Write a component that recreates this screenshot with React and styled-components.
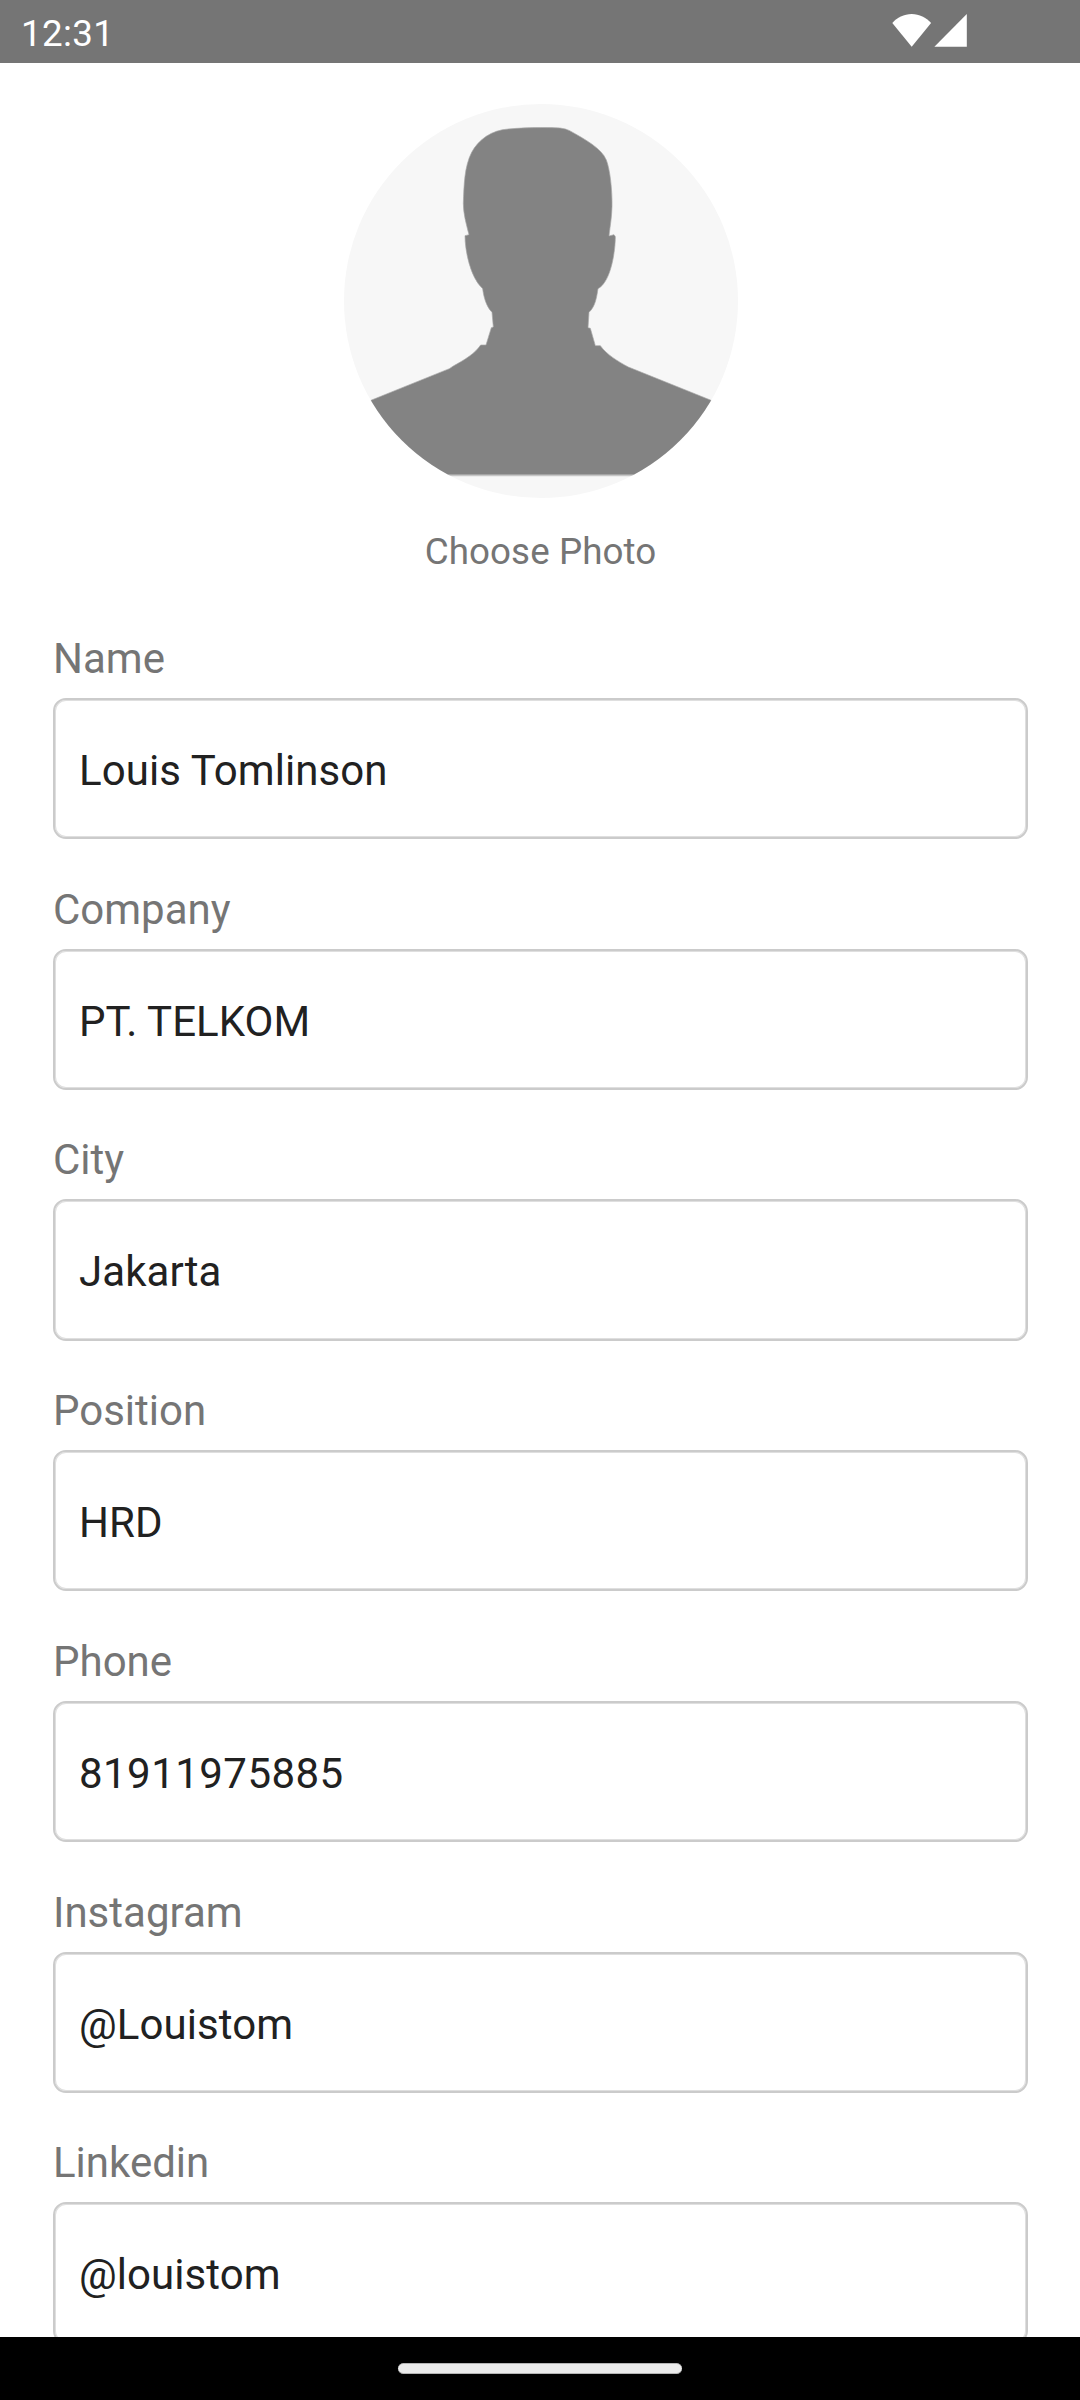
import React from "react";
import styled, { createGlobalStyle } from "styled-components";

const GlobalStyle = createGlobalStyle`
  body {
    margin: 0;
    background: #fff;
    font-family: Roboto, "Liberation Sans", sans-serif;
  }
  * { box-sizing: border-box; }
`;

const Screen = styled.div`
  display: flex;
  flex-direction: column;
  width: 1080px;
  height: 2400px;
  overflow: hidden;
  background: #fff;
`;

const StatusBar = styled.header`
  flex: none;
  display: flex;
  align-items: center;
  justify-content: space-between;
  height: 63px;
  padding: 0 113px 0 21px;
  background: #757575;
`;

const Clock = styled.time`
  color: #fff;
  font-size: 36.75px;
  line-height: 43px;
  letter-spacing: 0.35px;
  padding-top: 4px;
`;

const StatusIcons = styled.div`
  display: flex;
  gap: 2px;
  padding-bottom: 2px;
`;

const Content = styled.main`
  flex: 1;
  min-height: 0;
  overflow: hidden;
  padding: 41px 52px 0 53px;
`;

const PhotoPicker = styled.section`
  display: flex;
  flex-direction: column;
  align-items: center;
  padding-left: 1px;
`;

const Avatar = styled.svg`
  width: 394px;
  height: 394px;
  border-radius: 50%;
  background: #f7f7f7;
`;

const PhotoCaption = styled.span`
  margin-top: 32px;
  padding-right: 1px;
  color: #757575;
  font-size: 36.75px;
  line-height: 43px;
  letter-spacing: 0.07px;
`;

const Form = styled.form`
  padding-top: 60.02px;
`;

const Field = styled.label`
  display: flex;
  flex-direction: column;
  height: 250.72px;
`;

const Label = styled.span`
  flex: none;
  height: 65px;
  color: #757575;
  font-size: 42px;
  line-height: 51px;
`;

const Input = styled.input`
  flex: none;
  width: 100%;
  height: 141.3px;
  margin: 0;
  padding: 3.6px 24px 0;
  border: 2px solid #cbcbcb;
  border-radius: 13px;
  box-shadow: inset 0 0 0 1px #dfdfdf;
  background: transparent;
  color: #212121;
  font: 42px Roboto, "Liberation Sans", sans-serif;
  letter-spacing: ${({ $numeric }) => ($numeric ? "0.45px" : "0.07px")};
  outline: none;
`;

const NavigationBar = styled.footer`
  flex: none;
  display: flex;
  align-items: center;
  justify-content: center;
  height: 63px;
  background: #000;
`;

const Handle = styled.div`
  width: 284px;
  height: 11px;
  border: 1px solid #b4b4b4;
  border-width: 1px 0;
  border-radius: 5.5px;
  background: #ebebeb;
`;

const fields = [
  { label: "Name", value: "Louis Tomlinson" },
  { label: "Company", value: "PT. TELKOM" },
  { label: "City", value: "Jakarta" },
  { label: "Position", value: "HRD" },
  { label: "Phone", value: "81911975885", numeric: true },
  { label: "Instagram", value: "@Louistom" },
  { label: "Linkedin", value: "@louistom" },
];

export default function App() {
  return (
    <>
      <GlobalStyle />
      <Screen>
        <StatusBar>
          <Clock>12:31</Clock>
          <StatusIcons>
            <svg width="40" height="33" viewBox="0 0 40 33">
              <path d="M0.3 9C5 3.5 12 0 19.7 0S34 3.5 39.1 9L19.7 32.7Z" fill="#fff" />
            </svg>
            <svg width="33" height="33" viewBox="0 0 33 33">
              <path d="M32.8 0V32.8H0.4Z" fill="#fff" />
            </svg>
          </StatusIcons>
        </StatusBar>
        <Content>
          <PhotoPicker>
            <Avatar viewBox="42 42 1182 1182">
              <path
                d="M0 980L125 930L358 836L370 828C405 809 435 790 452 765H468L484 713L490 711L486 667C468 648 461 620 458 596C420 562 405 480 405 437L417 434C408 400 400 370 400 340C402 285 403 230 425 187C445 149 485 120 535 117C590 112 650 112 690 114Q708 116 719 122C765 148 815 175 829 210C840 238 847 300 846 350C845 385 840 410 837 438L852 434L856 440C856 480 844 575 804 596C800 620 797 648 777 667L774 713L781 715L796 767H811C829 793 865 815 895 831L1141 930L1260 978V1154H0Z"
                fill="#838383"
                stroke="#a8a8a8"
                strokeWidth="2"
              />
              <path d="M0 1157H1260" stroke="#c6c6c6" strokeWidth="4" />
            </Avatar>
            <PhotoCaption>Choose Photo</PhotoCaption>
          </PhotoPicker>
          <Form>
            {fields.map(({ label, value, numeric }) => (
              <Field key={label}>
                <Label>{label}</Label>
                <Input defaultValue={value} $numeric={numeric} spellCheck={false} />
              </Field>
            ))}
          </Form>
        </Content>
        <NavigationBar>
          <Handle />
        </NavigationBar>
      </Screen>
    </>
  );
}
